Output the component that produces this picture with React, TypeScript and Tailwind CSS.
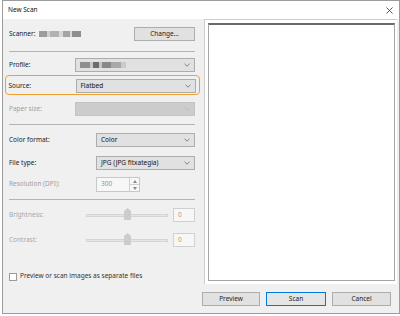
import React from "react";

const font = { fontFamily: '"Noto Sans", "Open Sans", sans-serif' };

function Chevron({ disabled }: { disabled?: boolean }) {
  return (
    <svg width="6" height="4" viewBox="0 0 6 4" className="shrink-0">
      <path d="M0.5 0.8 L3 3.2 L5.5 0.8" fill="none" stroke={disabled ? "#b8b8b8" : "#6a6a6a"} strokeWidth="0.8" />
    </svg>
  );
}

function Select({ width, value, disabled }: { width: string; value?: React.ReactNode; disabled?: boolean }) {
  return (
    <div
      className={`${width} h-[14px] flex items-center justify-between pl-[4px] pr-[4px] border ${
        disabled ? "bg-[#cccccc] border-[#c4c4c4]" : "bg-[#e1e1e1] border-[#adadad]"
      }`}
    >
      <span className="text-[6.5px] leading-none text-[#111]">{value}</span>
      <Chevron disabled={disabled} />
    </div>
  );
}

function Blur({ widths }: { widths: [number, string][] }) {
  return (
    <span className="flex items-center blur-[0.5px]">
      {widths.map(([w, c], i) => (
        <span key={i} className="h-[6px]" style={{ width: w, background: c }} />
      ))}
    </span>
  );
}

function Separator() {
  return <div className="h-px bg-[#b4b4b4]" />;
}

function Slider() {
  return (
    <div className="relative w-[82px] h-[14px] flex items-center">
      <div className="w-full h-[3px] bg-[#e6e6e6] border border-[#d4d4d4]" />
      <svg width="7" height="12" viewBox="0 0 7 12" className="absolute left-[38px] top-[0px]">
        <path d="M0 3 L3.5 0 L7 3 L7 12 L0 12 Z" fill="#cccccc" />
      </svg>
    </div>
  );
}

function Button({ label, focused, width }: { label: string; focused?: boolean; width: string }) {
  return (
    <div
      className={`${width} h-[14px] flex items-center justify-center text-[6.5px] leading-none text-[#222] ${
        focused ? "bg-[#e5e5e5] border-[1.5px] border-[#0078d7]" : "bg-[#e1e1e1] border border-[#adadad]"
      }`}
    >
      {label}
    </div>
  );
}

export default function App() {
  return (
    <div className="w-[400px] h-[316px] bg-white pl-[2px]" style={font}>
      <div className="w-[398px] h-[314px] border border-[#9c9c9c] flex flex-col bg-[#f0f0f0]">
        {/* title bar */}
        <div className="h-[18px] bg-white flex items-center justify-between pl-[5px] pr-[6px] shrink-0">
          <span className="text-[6.5px] leading-none text-[#111]">New Scan</span>
          <svg width="7" height="7" viewBox="0 0 7 7">
            <path d="M0.5 0.5 L6.5 6.5 M6.5 0.5 L0.5 6.5" stroke="#444" strokeWidth="0.9" />
          </svg>
        </div>

        <div className="flex h-[265px] shrink-0">
          {/* left settings */}
          <div className="w-[201px] pl-[6px] pr-[9px] flex flex-col text-[6.5px] leading-none text-[#1a1a1a]">
            <div className="mt-[8px] h-[14px] flex items-center justify-between">
              <div className="flex items-center gap-[4px]">
                <span>Scanner:</span>
                <Blur widths={[[8, "#9c9c9c"], [3, "#cfcfcf"], [9, "#b2b2b2"], [4, "#d8d8d8"], [7, "#a4a4a4"], [2, "#d8d8d8"], [9, "#8e8e8e"]]} />
              </div>
              <Button label="Change..." width="w-[61px]" />
            </div>

            <div className="mt-[10px]">
              <Separator />
            </div>

            <div className="mt-[6px] h-[14px] flex items-center justify-between">
              <span>Profile:</span>
              <Select
                width="w-[120px]"
                value={<Blur widths={[[10, "#8e8e8e"], [3, "#c8c8c8"], [6, "#6c6c6c"], [3, "#c4c4c4"], [9, "#888888"], [10, "#a8a8a8"], [5, "#cbcbcb"]]} />}
              />
            </div>

            <div className="mt-[3px] -ml-[4px] -mr-[5px] h-[20px] pt-[2px] pl-[2.5px] pr-[3.5px] flex items-center justify-between border-[1.5px] border-[#f0a030] rounded-[4px]">
              <span>Source:</span>
              <Select width="w-[120px]" value="Flatbed" />
            </div>

            <div className="mt-[7px] h-[14px] flex items-center justify-between">
              <span className="text-[#a0a0a0]">Paper size:</span>
              <Select width="w-[120px]" disabled />
            </div>

            <div className="mt-[8px]">
              <Separator />
            </div>

            <div className="mt-[8px] h-[14px] flex items-center justify-between">
              <span>Color format:</span>
              <Select width="w-[99px]" value="Color" />
            </div>

            <div className="mt-[9px] h-[14px] flex items-center justify-between">
              <span>File type:</span>
              <Select width="w-[99px]" value="JPG (JPG fitxategia)" />
            </div>

            <div className="mt-[7px] h-[15px] flex items-center">
              <span className="w-[87px] text-[#a0a0a0]">Resolution (DPI):</span>
              <div className="w-[44px] h-[15px] border border-[#c8c8c8] bg-[#f7f7f7] flex">
                <span className="flex-1 flex items-center pl-[4px] text-[#8a94a8]">300</span>
                <div className="w-[10px] border-l border-[#d0d0d0] flex flex-col">
                  <div className="flex-1 flex items-center justify-center border-b border-[#d0d0d0]">
                    <svg width="4" height="3" viewBox="0 0 4 3"><path d="M0 3 L2 0 L4 3 Z" fill="#888" /></svg>
                  </div>
                  <div className="flex-1 flex items-center justify-center">
                    <svg width="4" height="3" viewBox="0 0 4 3"><path d="M0 0 L2 3 L4 0 Z" fill="#888" /></svg>
                  </div>
                </div>
              </div>
            </div>

            <div className="mt-[7px]">
              <Separator />
            </div>

            <div className="mt-[8px] h-[14px] flex items-center">
              <span className="w-[77px] text-[#a8a8a8]">Brightness:</span>
              <Slider />
              <div className="ml-[5px] w-[22px] h-[14px] border border-[#cfcfcf] bg-[#f7f7f7] flex items-center pl-[4px] text-[#c09a6a]">0</div>
            </div>

            <div className="mt-[11px] h-[14px] flex items-center">
              <span className="w-[77px] text-[#a8a8a8]">Contrast:</span>
              <Slider />
              <div className="ml-[5px] w-[22px] h-[14px] border border-[#cfcfcf] bg-[#f7f7f7] flex items-center pl-[4px] text-[#c09a6a]">0</div>
            </div>

            <div className="mt-[25px] h-[9px] flex items-center gap-[3px]">
              <div className="w-[8px] h-[8px] border border-[#9a9a9a] bg-white" />
              <span className="text-[#333]">Preview or scan images as separate files</span>
            </div>
          </div>

          {/* preview */}
          <div className="w-[193px] h-[265px] bg-white border-t border-l border-[#cdcdcd] pt-[3px] pl-[3px] pr-[2px] pb-[3px] flex">
            <div className="flex-1 border border-[#a6a6a6] border-t-2 border-t-[#6a6a6a]" />
          </div>
        </div>

        <div className="mt-[8px] flex justify-end gap-[6px] pr-[8px]">
          <Button label="Preview" width="w-[58px]" />
          <Button label="Scan" width="w-[60px]" focused />
          <Button label="Cancel" width="w-[59px]" />
        </div>
      </div>
    </div>
  );
}
